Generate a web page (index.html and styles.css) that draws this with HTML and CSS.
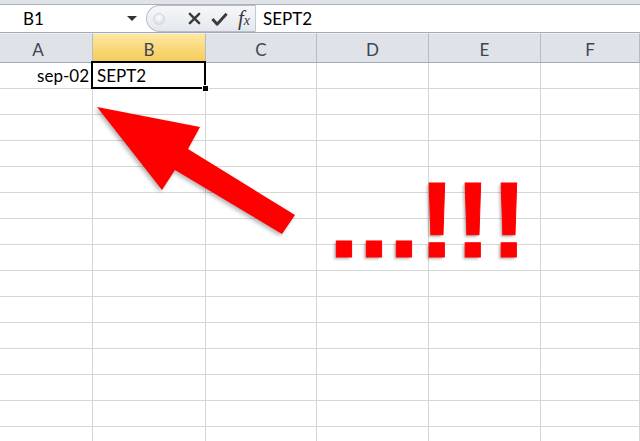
FILE: index.html
```html
<!DOCTYPE html>
<html lang="en">
<head>
  <meta charset="UTF-8">
  <meta name="viewport" content="width=device-width, initial-scale=1.0">
  <title>SEPT2</title>
  <link rel="stylesheet" href="styles.css">
</head>
<body>
  <div class="top-strip"></div>

  <div class="formula-bar">
    <div class="name-box">
      <span class="name-value">B1</span>
      <span class="caret"></span>
    </div>
    <div class="fx-pill">
      <span class="pill-knob"></span>
      <svg class="pill-icon" width="13" height="13" viewBox="0 0 14 14">
        <path d="M2 2 L12 12 M12 2 L2 12" stroke="#3a3a3a" stroke-width="2.6" stroke-linecap="round"/>
      </svg>
      <svg class="pill-icon" width="17" height="14" viewBox="0 0 18 14">
        <path d="M1.5 7 L6.5 12.5 L16.5 1.5" fill="none" stroke="#3a3a3a" stroke-width="3" stroke-linejoin="round"/>
      </svg>
      <span class="fx-label"><i>f</i><span class="fx-x">x</span></span>
    </div>
    <div class="formula-input">SEPT2</div>
  </div>

  <div class="sheet" id="sheet">
    <div class="col-head col-a">A</div>
    <div class="col-head selected">B</div>
    <div class="col-head">C</div>
    <div class="col-head">D</div>
    <div class="col-head">E</div>
    <div class="col-head">F</div>

    <div class="cell right">sep-02</div>
    <div class="cell active">SEPT2</div>
    <div class="cell"></div>
    <div class="cell"></div>
    <div class="cell"></div>
    <div class="cell"></div>
  </div>

  <svg class="big-arrow" width="640" height="441" viewBox="0 0 640 441">
    <polygon points="97,107 200,127 188,149 295,215 282,234 175,170 162,190" fill="#ff0000"/>
  </svg>

  <div class="shout">...!!!</div>

  <script>
    const sheet = document.getElementById('sheet');
    for (let r = 0; r < 14; r++) {
      for (let c = 0; c < 6; c++) {
        const cell = document.createElement('div');
        cell.className = 'cell';
        sheet.appendChild(cell);
      }
    }
  </script>
</body>
</html>
```

FILE: styles.css
```css
body {
  margin: 0;
  padding: 0;
  width: 640px;
  height: 441px;
  overflow: hidden;
  background-color: #fff;
  font-family: Lato, "Open Sans", sans-serif;
  color: #000;
}
.top-strip {
  height: 4px;
  background-color: #dfe3e8;
  border-bottom: 1px solid #a9b0b9;
}
.formula-bar {
  display: flex;
  height: 27px;
  border-bottom: 1px solid #a3aab3;
  background-color: #fff;
}
.name-box {
  width: 146px;
  display: flex;
  align-items: center;
  box-sizing: border-box;
  padding-left: 23px;
  font-size: 17px;
}
.name-value {
  flex: 1;
}
.caret {
  width: 0;
  height: 0;
  border-left: 5px solid transparent;
  border-right: 5px solid transparent;
  border-top: 5px solid #333;
  margin-right: 9px;
}
.fx-pill {
  width: 110px;
  box-sizing: border-box;
  display: flex;
  align-items: center;
  border: 1px solid #b7bec7;
  border-right: 1px solid #c3c9d0;
  border-radius: 14px 0 0 14px;
  background: linear-gradient(#f6f7f9, #e4e8ed);
}
.pill-knob {
  width: 10px;
  height: 10px;
  margin-left: 6px;
  margin-right: 23px;
  border-radius: 50%;
  background: radial-gradient(circle at 50% 40%, #ffffff, #cfd4da);
  border: 1px solid #d3d8de;
}
.pill-icon {
  margin-right: 10px;
}
.fx-label {
  font-family: "Liberation Serif", serif;
  font-size: 21px;
  line-height: 1;
  color: #3a3a3a;
}
.fx-x {
  font-size: 14px;
  font-style: italic;
}
.formula-input {
  flex: 1;
  display: flex;
  align-items: center;
  padding-left: 7px;
  font-size: 17px;
}
.sheet {
  display: grid;
  grid-template-columns: 93px 113px 111px 112px 112px 1fr;
  grid-template-rows: 30px;
  grid-auto-rows: 26px;
}
.col-head {
  box-sizing: border-box;
  display: flex;
  align-items: center;
  justify-content: center;
  padding-top: 2px;
  font-size: 17px;
  color: #3b4656;
  background-color: #dfe3e8;
  border-right: 1px solid #b3bcc7;
  border-bottom: 1px solid #9eaab7;
  border-top: 1px solid #eef0f3;
}
.col-head.col-a {
  padding-right: 16px;
}
.col-head.selected {
  background: linear-gradient(#fde7a2, #f6cb58);
  border-bottom-color: #c9a354;
}
.cell {
  position: relative;
  box-sizing: border-box;
  border-right: 1px solid #d6d6d6;
  border-bottom: 1px solid #d6d6d6;
  display: flex;
  align-items: flex-end;
  padding: 0 4px 2px 4px;
  font-size: 17px;
  line-height: 20px;
}
.cell.right {
  justify-content: flex-end;
  padding-right: 3px;
}
.cell.active::after {
  content: "";
  position: absolute;
  left: -2px;
  top: -2px;
  right: -1px;
  bottom: -1px;
  border: 2px solid #000;
}
.cell.active::before {
  content: "";
  position: absolute;
  right: -4px;
  bottom: -4px;
  width: 5px;
  height: 5px;
  background-color: #000;
  border: 1px solid #fff;
  z-index: 1;
}
.big-arrow {
  position: absolute;
  left: 0;
  top: 0;
  pointer-events: none;
  filter: drop-shadow(-2px 2px 2px rgba(0, 0, 0, 0.3));
}
.shout {
  position: absolute;
  left: 329px;
  top: 166px;
  font-family: "Liberation Sans", Arial, sans-serif;
  font-weight: bold;
  font-size: 108px;
  line-height: 1;
  color: #ff0000;
  -webkit-text-stroke: 1px #ff0000;
  text-shadow: -2px 2px 3px rgba(0, 0, 0, 0.3);
}
```
